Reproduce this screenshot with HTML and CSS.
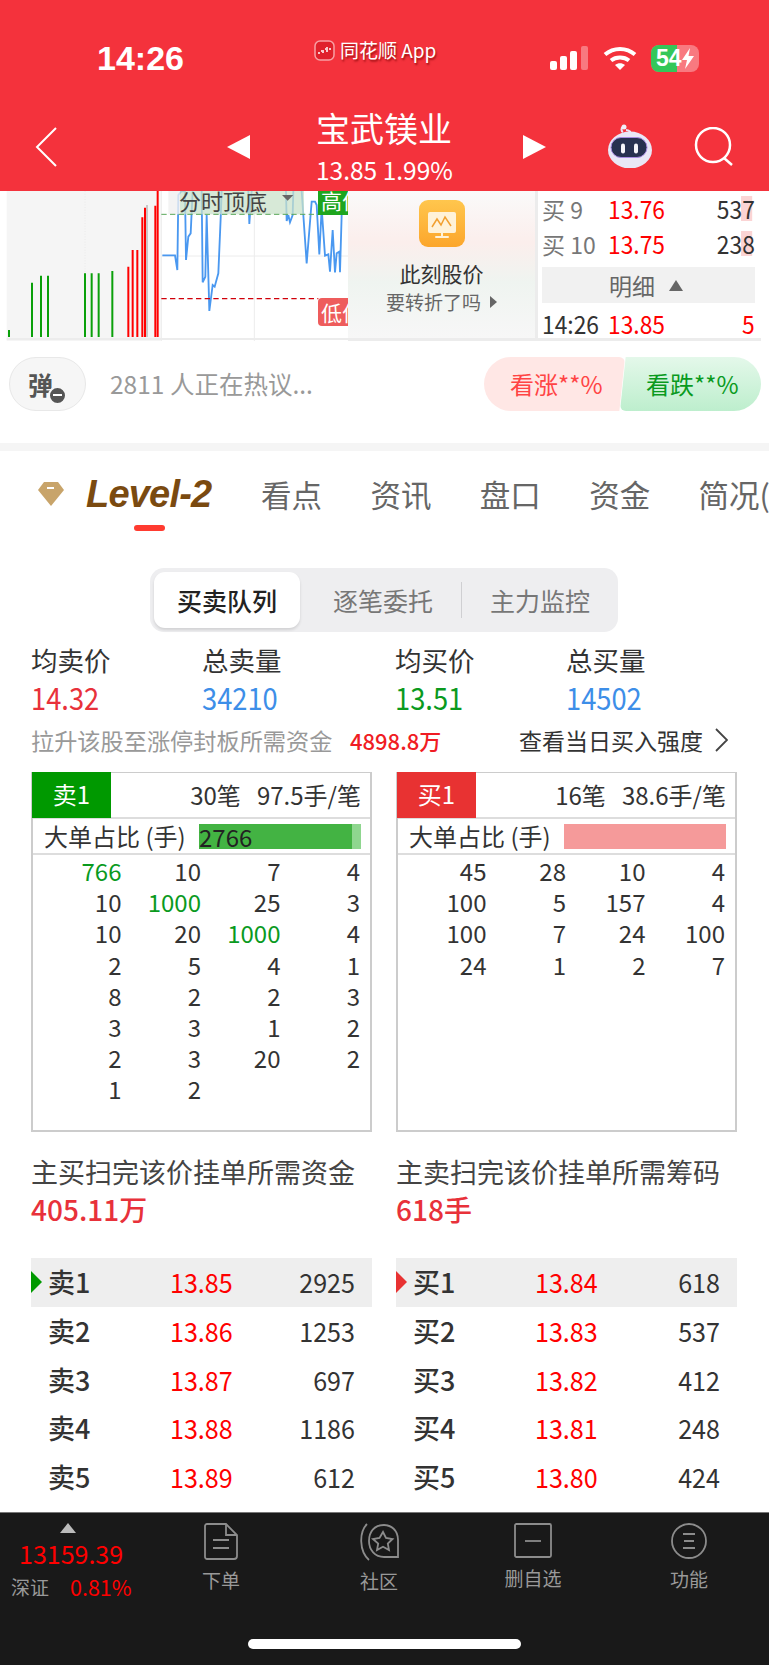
FILE: index.html
```html
<!DOCTYPE html>
<html>
<head>
  <meta charset="UTF-8">
  <meta name="viewport" content="width=device-width, initial-scale=1.0">
  <title>宝武镁业</title>
  <link rel="stylesheet" href="styles.css">
</head>
<body>
  <div class="page">
    <!-- 顶部 -->
    <div class="top">
      <div class="status">
        <span class="time">14:26</span>
        <span class="app-logo">
          <svg width="21" height="21" viewBox="0 0 21 21"><rect x="1" y="1" width="19" height="19" rx="5" fill="#e0212b" stroke="#f8a0a4" stroke-width="1.5"/><path d="M4 13h2M7 11h1M9 13v-3M11 9h1M13 12V7M15 9h2" stroke="#fff" stroke-width="1.5" fill="none"/></svg>
        </span>
        <span class="app-name">同花顺 App</span>
        <svg class="signal" width="38" height="24" viewBox="0 0 38 24"><rect x="0" y="15" width="7" height="9" rx="2" fill="#fff"/><rect x="10" y="10" width="7" height="14" rx="2" fill="#fff"/><rect x="20" y="5" width="7" height="19" rx="2" fill="#fff"/><rect x="31" y="0" width="7" height="24" rx="2" fill="#fff" fill-opacity=".35"/></svg>
        <svg class="wifi" width="34" height="24" viewBox="0 0 34 24" fill="none" stroke="#fff" stroke-width="4"><path d="M2 8.5C10.500 1 23.500 1 32 8.500"/><path d="M8 14.500C13 10.500 21 10.500 26 14.500"/><path d="M17 24l-5-5c3-2.500 7-2.500 10 0z" fill="#fff" stroke="none"/></svg>
        <span class="battery">
          <span class="battery-fill"></span>
          <span class="battery-text">54</span>
          <svg class="battery-bolt" width="12" height="21" viewBox="0 0 12 21"><path d="M8 0L0 12h5l-2 9 9-13H6.500z" fill="#fff"/></svg>
        </span>
      </div>
      <div class="nav">
        <svg class="back" width="22" height="40" viewBox="0 0 22 40" fill="none" stroke="#fff" stroke-width="2"><path d="M21 1L2 20l19 19"/></svg>
        <span class="tri-left"></span>
        <div class="title">
          <div class="title-name">宝武镁业</div>
          <div class="title-sub">13.85 1.99%</div>
        </div>
        <span class="tri-right"></span>
        <svg class="robot" width="48" height="44" viewBox="0 0 48 44">
          <path d="M17 8c-2-1-2-4 0-5" stroke="#e8e4f5" stroke-width="2" fill="none"/>
          <circle cx="18" cy="3" r="2.500" fill="#f0eef8"/>
          <path d="M20 6c4 0 3 2 5 2" stroke="#e8e4f5" stroke-width="2" fill="none"/>
          <ellipse cx="24" cy="26" rx="22" ry="18.500" fill="#e9e7f6"/>
          <rect x="5" y="13.500" width="36" height="20" rx="10" fill="#27314f" stroke="#a78be0" stroke-width="1"/>
          <rect x="15" y="19.500" width="4" height="10" rx="2" fill="#f4f4f8"/>
          <rect x="28" y="19.500" width="4" height="10" rx="2" fill="#f4f4f8"/>
        </svg>
        <svg class="search" width="40" height="40" viewBox="0 0 40 40" fill="none" stroke="#fff" stroke-width="2.500"><circle cx="19" cy="18" r="17"/><path d="M30 31l8 7"/></svg>
      </div>
    </div>

    <!-- 分时图 -->
    <div class="quote">
      <div class="chart">
        <svg class="chart-svg" width="348" height="150" viewBox="0 18 1044 450">
          <rect x="0" y="18" width="1044" height="450" fill="#fff"/>
          <rect x="20" y="18" width="462" height="450" fill="#f5f5f5"/>
          <path d="M255 18V440" stroke="#e6e6e6" stroke-width="2" stroke-dasharray="3 5"/>
          <path d="M763 18V468M484 18V468M485 213H1044" stroke="#ececec" stroke-width="3"/>
          <path d="M20 462H1044" stroke="#ececec" stroke-width="6"/>
          <g stroke="#0aa00a" stroke-width="6" fill="none">
            <path d="M27 456V435M96 456V293M123 456V272M144 456V272M255 456V265M275 456V265M296 456V265M337 456V258"/>
          </g>
          <path d="M441 456V60" stroke="#c8c8c8" stroke-width="6"/>
          <g stroke="#ff0000" stroke-width="6" fill="none">
            <path d="M385 456V245M398 456V195M412 456V195M427 456V97M435 456V68M466 456V62"/>
            <path d="M473 456V18"/>
          </g>
          <path d="M487 211H525L532 255L535 30L545 18L555 20L558 225L565 155L572 145L578 18M605 18L608 292L616 275L620 90L628 378L638 300L644 305L655 265L662 100L665 18M745 18L748 117L755 18M858 18L860 108L865 90L870 112L878 90L880 18M905 18L920 235L935 50L945 50L950 60L958 208L965 70L975 212L985 208L990 260L998 135L1005 262L1010 205L1018 200L1020 262L1025 90L1030 18" fill="none" stroke="#4a98f0" stroke-width="5.500"/>
          <rect x="505" y="18" width="35" height="70" fill="#f0f0f0" fill-opacity=".8"/>
          <rect x="540" y="18" width="372" height="70" fill="#c9e2c9" fill-opacity=".75"/>
          <path d="M484 88H955" stroke="#5aa85a" stroke-width="3" stroke-dasharray="16 10"/>
          <path d="M484 341H955" stroke="#d0000a" stroke-width="3.500" stroke-dasharray="16 10"/>
          <path d="M846 30h34l-17 17z" fill="#666"/>
        </svg>
        <span class="chart-tip">分时顶底</span>
        <span class="tag-high">高位</span>
        <span class="tag-low">低位</span>
      </div>
      <div class="promo">
        <svg class="promo-icon" width="46" height="47" viewBox="0 0 46 47">
          <defs><linearGradient id="orange" x1="0" y1="0" x2="0" y2="1"><stop offset="0" stop-color="#ffc64d"/><stop offset="1" stop-color="#fca62c"/></linearGradient></defs>
          <rect width="46" height="47" rx="9" fill="url(#orange)"/>
          <rect x="9" y="12" width="28" height="21" rx="2" fill="#fff2d8"/>
          <path d="M13 27l5-8 4 6 4-8 6 9" fill="none" stroke="#f2a030" stroke-width="1.500"/>
          <rect x="16" y="36" width="14" height="2" rx="1" fill="#fff2d8"/>
          <rect x="22" y="33" width="2" height="4" fill="#fff2d8"/>
        </svg>
        <div class="promo-title">此刻股价</div>
        <div class="promo-sub">要转折了吗<span class="promo-arrow"></span></div>
      </div>
      <div class="depth">
        <div class="depth-row"><span class="depth-name">买 9</span><span class="num up depth-price">13.76</span><span class="num depth-qty"><i class="depth-shade"></i>537</span></div>
        <div class="depth-row"><span class="depth-name">买 10</span><span class="num up depth-price">13.75</span><span class="num depth-qty"><i class="depth-shade"></i>238</span></div>
        <div class="depth-detail">明细<span class="depth-tri"></span></div>
        <div class="depth-row depth-last"><span class="num depth-time">14:26</span><span class="num up depth-price">13.85</span><span class="num up depth-qty">5</span></div>
      </div>
    </div>

    <!-- 弹幕 -->
    <div class="talk">
      <div class="danmu">弹<span class="danmu-minus"></span></div>
      <div class="talk-text">2811 人正在热议...</div>
      <div class="vote vote-up">看涨**%</div>
      <div class="vote vote-down">看跌**%</div>
    </div>
    <div class="sep"></div>

    <!-- tab -->
    <div class="tabs">
      <svg class="gem" width="26" height="24" viewBox="0 0 26 24"><path d="M6 0h14l6 8-13 16L0 8z" fill="#c8a46a"/><path d="M9 6h7" stroke="#fff" stroke-width="2"/></svg>
      <span class="tab-level">Level-2</span>
      <span class="tab tab-1">看点</span>
      <span class="tab">资讯</span>
      <span class="tab">盘口</span>
      <span class="tab">资金</span>
      <span class="tab">简况(</span>
    </div>
    <div class="tab-line"></div>

    <div class="segment">
      <span class="seg seg-on">买卖队列</span>
      <span class="seg seg-2">逐笔委托</span>
      <span class="seg-div"></span>
      <span class="seg seg-3">主力监控</span>
    </div>

    <div class="stats">
      <div><div class="stat-label">均卖价</div><div class="num stat-val stat-red">14.32</div></div>
      <div><div class="stat-label">总卖量</div><div class="num stat-val stat-blue">34210</div></div>
      <div><div class="stat-label">均买价</div><div class="num stat-val stat-green">13.51</div></div>
      <div><div class="stat-label">总买量</div><div class="num stat-val stat-blue">14502</div></div>
    </div>

    <div class="seal">
      <span class="seal-text">拉升该股至涨停封板所需资金</span>
      <span class="seal-val">4898.8万</span>
      <span class="seal-link">查看当日买入强度</span>
      <svg class="seal-arrow" width="13" height="24" viewBox="0 0 13 24" fill="none" stroke="#444" stroke-width="1.800"><path d="M1 1l11 11L1 23"/></svg>
    </div>

    <!-- 买卖队列 -->
    <div class="cols queues">
      <div class="queue">
        <div class="queue-head">
          <span class="queue-tag tag-sell">卖1</span>
          <span class="queue-info">30笔&nbsp;&nbsp;&nbsp;97.5手/笔</span>
        </div>
        <div class="queue-big">
          <span>大单占比 (手)</span>
          <div class="big-bar bar-sell"><span class="bar-fill"></span><span class="bar-num">2766</span></div>
        </div>
        <div class="queue-grid">
          <span class="big">766</span><span>10</span><span>7</span><span>4</span>
          <span>10</span><span class="big">1000</span><span>25</span><span>3</span>
          <span>10</span><span>20</span><span class="big">1000</span><span>4</span>
          <span>2</span><span>5</span><span>4</span><span>1</span>
          <span>8</span><span>2</span><span>2</span><span>3</span>
          <span>3</span><span>3</span><span>1</span><span>2</span>
          <span>2</span><span>3</span><span>20</span><span>2</span>
          <span>1</span><span>2</span><span></span><span></span>
        </div>
      </div>
      <div class="queue">
        <div class="queue-head">
          <span class="queue-tag tag-buy">买1</span>
          <span class="queue-info">16笔&nbsp;&nbsp;&nbsp;38.6手/笔</span>
        </div>
        <div class="queue-big">
          <span>大单占比 (手)</span>
          <div class="big-bar bar-buy"></div>
        </div>
        <div class="queue-grid">
          <span>45</span><span>28</span><span>10</span><span>4</span>
          <span>100</span><span>5</span><span>157</span><span>4</span>
          <span>100</span><span>7</span><span>24</span><span>100</span>
          <span>24</span><span>1</span><span>2</span><span>7</span>
        </div>
      </div>
    </div>

    <div class="cols sweep">
      <div>
        <div class="sweep-title">主买扫完该价挂单所需资金</div>
        <div class="sweep-val">405.11万</div>
      </div>
      <div>
        <div class="sweep-title">主卖扫完该价挂单所需筹码</div>
        <div class="sweep-val">618手</div>
      </div>
    </div>

    <!-- 五档 -->
    <div class="cols book">
      <div>
        <div class="book-row book-on"><i class="book-mark mark-sell"></i><span>卖1</span><span class="num up">13.85</span><span class="num book-qty">2925</span></div>
        <div class="book-row"><span>卖2</span><span class="num up">13.86</span><span class="num book-qty">1253</span></div>
        <div class="book-row"><span>卖3</span><span class="num up">13.87</span><span class="num book-qty">697</span></div>
        <div class="book-row"><span>卖4</span><span class="num up">13.88</span><span class="num book-qty">1186</span></div>
        <div class="book-row"><span>卖5</span><span class="num up">13.89</span><span class="num book-qty">612</span></div>
      </div>
      <div>
        <div class="book-row book-on"><i class="book-mark mark-buy"></i><span>买1</span><span class="num up">13.84</span><span class="num book-qty">618</span></div>
        <div class="book-row"><span>买2</span><span class="num up">13.83</span><span class="num book-qty">537</span></div>
        <div class="book-row"><span>买3</span><span class="num up">13.82</span><span class="num book-qty">412</span></div>
        <div class="book-row"><span>买4</span><span class="num up">13.81</span><span class="num book-qty">248</span></div>
        <div class="book-row"><span>买5</span><span class="num up">13.80</span><span class="num book-qty">424</span></div>
      </div>
    </div>

    <!-- 底部 -->
    <div class="foot">
      <div class="foot-bar">
        <div class="market">
          <span class="market-tri"></span>
          <div class="market-val">13159.39</div>
          <div class="market-line"><span class="market-name">深证</span><span class="market-pct">0.81%</span></div>
        </div>
        <div class="foot-item">
          <svg width="34" height="37" viewBox="0 0 34 37" fill="none" stroke="#8c8c8c" stroke-width="1.800"><path d="M3 1h19l11 11v21a3 3 0 0 1-3 3H3a2 2 0 0 1-2-2V3a2 2 0 0 1 2-2z"/><path d="M22 1v11h11M9 17h16M9 25h16"/></svg>
          <span>下单</span>
        </div>
        <div class="foot-item foot-community">
          <svg width="40" height="38" viewBox="0 0 40 38" fill="none" stroke="#8c8c8c" stroke-width="1.800"><path d="M39 34V17C39 7 32 2 25 2C15 2 10 9 10 18C10 27 16 34 25 34Z"/><path d="M8 1C0 9 0 28 10 37"/><path d="M24 9l3 6 6.500 1-4.700 4.500 1.200 6.500-6-3.200-6 3.200 1.200-6.500L14 16l6.500-1z"/></svg>
          <span>社区</span>
        </div>
        <div class="foot-item foot-watch">
          <svg width="38" height="35" viewBox="0 0 38 35" fill="none" stroke="#8c8c8c" stroke-width="1.800"><rect x="1" y="1" width="36" height="33" rx="1.500"/><path d="M11 18h16"/></svg>
          <span>删自选</span>
        </div>
        <div class="foot-item">
          <svg width="36" height="36" viewBox="0 0 36 36" fill="none" stroke="#8c8c8c" stroke-width="1.800"><ellipse cx="18" cy="18" rx="17" ry="17"/><path d="M12 11h12M13 18h10M12 25h12"/></svg>
          <span>功能</span>
        </div>
      </div>
      <div class="home-bar"></div>
    </div>
  </div>
</body>
</html>
```

FILE: styles.css
```css
body {
  margin: 0;
  font-family: "Noto Sans CJK SC", "Liberation Sans", sans-serif;
  color: #333;
  background: #fff;
}
.page {
  width: 769px;
  height: 1665px;
  overflow: hidden;
  display: flex;
  flex-direction: column;
}
.num {
  display: inline-block;
  transform: scaleX(.93);
  transform-origin: left center;
}
.up {
  color: #f00;
}

/* top */
.top {
  height: 191px;
  flex: none;
  background: #f4323c;
  color: #fff;
}
.status {
  height: 84px;
  padding-top: 16px;
  display: flex;
  align-items: center;
}
.time {
  margin-left: 97px;
  width: 217px;
  flex: none;
  font-family: "Liberation Sans", sans-serif;
  font-size: 34px;
  font-weight: bold;
}
.app-logo {
  display: flex;
  margin-top: -16px;
}
.app-name {
  margin: -16px 0 0 5px;
  width: 210px;
  flex: none;
  font-size: 19px;
  line-height: 26px;
  text-shadow: 1px 2px 2px rgba(120, 0, 0, .7);
}
.wifi {
  margin-left: 15px;
}
.battery {
  margin-left: 14px;
  width: 48px;
  height: 27px;
  border-radius: 8px;
  background: rgba(255, 255, 255, .35);
  overflow: hidden;
  position: relative;
  display: flex;
  align-items: center;
}
.battery-fill {
  position: absolute;
  left: 0;
  top: 0;
  bottom: 0;
  width: 26px;
  background: #34c759;
}
.battery-text {
  position: relative;
  margin-left: 5px;
  font-family: "Liberation Sans", sans-serif;
  font-size: 23px;
  font-weight: bold;
}
.battery-bolt {
  position: relative;
}
.nav {
  height: 91px;
  display: flex;
  align-items: center;
  padding-left: 35px;
}
.back {
  flex: none;
  margin-top: 3px;
}
.tri-left {
  margin: 3px 0 0 170px;
  border-style: solid;
  border-width: 12.500px 23px 12.500px 0;
  border-color: transparent #fff transparent transparent;
}
.tri-right {
  margin: 3px 0 0 71px;
  border-style: solid;
  border-width: 12.500px 0 12.500px 23px;
  border-color: transparent transparent transparent #fff;
}
.title {
  margin-left: 66px;
  width: 136px;
  flex: none;
  text-align: center;
  white-space: nowrap;
}
.title-name {
  font-size: 34px;
  line-height: 40px;
}
.title-sub {
  margin-top: 8px;
  font-size: 24.500px;
  line-height: 28px;
}
.robot {
  flex: none;
  margin-left: 60px;
}
.search {
  flex: none;
  margin: 3px 0 0 40px;
}

/* chart */
.quote {
  height: 150px;
  flex: none;
  display: flex;
  overflow: hidden;
}
.chart {
  width: 348px;
  flex: none;
  position: relative;
  overflow: hidden;
}
.chart-svg {
  display: block;
}
.chart-tip {
  position: absolute;
  left: 179px;
  top: -6px;
  font-size: 22px;
  line-height: 30px;
  color: #444;
}
.tag-high,
.tag-low {
  position: absolute;
  left: 318px;
  width: 44px;
  padding-left: 3px;
  color: #fff;
  font-size: 21px;
  white-space: nowrap;
}
.tag-high {
  top: -6px;
  height: 30px;
  line-height: 30px;
  background: #1ea51e;
}
.tag-low {
  top: 107px;
  height: 28px;
  line-height: 28px;
  background: #ee5c5c;
  border-radius: 4px 0 0 4px;
}
.promo {
  width: 187px;
  flex: none;
  box-sizing: border-box;
  padding-top: 9px;
  border-bottom: 3px solid #ececec;
  display: flex;
  flex-direction: column;
  align-items: center;
  background: linear-gradient(180deg, #fafafa 0%, #fbeeec 35%, #eff4f0 62%, #f7f7f7 100%);
}
.promo-icon {
  display: block;
}
.promo-title {
  margin-top: 13px;
  font-size: 21px;
  line-height: 26px;
  color: #333;
}
.promo-sub {
  margin-top: 5px;
  font-size: 19px;
  line-height: 22px;
  color: #666;
  display: flex;
  align-items: center;
}
.promo-arrow {
  margin-left: 9px;
  border-style: solid;
  border-width: 6px 0 6px 7px;
  border-color: transparent transparent transparent #666;
}
.depth {
  width: 226px;
  flex: none;
  box-sizing: border-box;
  padding: 0 6px 0 4px;
  border-left: 3px solid #ececec;
  border-bottom: 3px solid #ececec;
}
.depth-row {
  height: 35px;
  display: flex;
  align-items: center;
  font-size: 24.500px;
  line-height: 30px;
  white-space: nowrap;
}
.depth-name {
  width: 66px;
  flex: none;
  font-size: 23px;
  color: #777;
}
.depth-price {
  width: 85px;
  flex: none;
}
.depth-qty {
  margin-left: auto;
  position: relative;
  color: #333;
  transform-origin: right center;
}
.depth-qty.up {
  color: #f00;
}
.depth-shade {
  position: absolute;
  right: 3px;
  top: 2px;
  width: 12px;
  height: 25px;
  background: #fbd4d4;
  z-index: -1;
}
.depth-time {
  width: 66px;
  flex: none;
}
.depth-detail {
  height: 36px;
  margin-top: 6px;
  background: #f1f1f1;
  display: flex;
  align-items: center;
  padding-left: 67px;
  font-size: 23px;
  color: #666;
}
.depth-tri {
  margin-left: 14px;
  border-style: solid;
  border-width: 0 7px 11px 7px;
  border-color: transparent transparent #666 transparent;
}
.depth-last {
  margin-top: 3px;
}

/* talk */
.talk {
  height: 86px;
  padding-top: 16px;
  flex: none;
  display: flex;
  align-items: flex-start;
  padding-left: 9px;
}
.danmu {
  width: 77px;
  height: 54px;
  flex: none;
  box-sizing: border-box;
  border: 1px solid #e8e8e8;
  border-radius: 27px;
  background: #f6f6f6;
  padding-left: 18px;
  font-size: 25px;
  font-weight: bold;
  line-height: 52px;
  color: #555;
  position: relative;
}
.danmu-minus {
  position: absolute;
  left: 38px;
  top: 28px;
  width: 15px;
  height: 15px;
  border-radius: 50%;
  background: #555;
  border: 2px solid #f6f6f6;
}
.danmu-minus::after {
  content: "";
  position: absolute;
  left: 3px;
  top: 6px;
  width: 9px;
  height: 2px;
  background: #fff;
}
.talk-text {
  margin-left: 24px;
  width: 374px;
  flex: none;
  font-size: 24.500px;
  line-height: 54px;
  color: #999;
}
.vote {
  height: 54px;
  width: 141px;
  flex: none;
  box-sizing: border-box;
  font-size: 24px;
  line-height: 54px;
  white-space: nowrap;
}
.vote-up {
  padding-left: 26px;
  color: #f44;
  background: #ffe7e5;
  border-radius: 27px 6px 6px 27px;
  clip-path: polygon(0 0, 100% 0, 96% 100%, 0 100%);
}
.vote-down {
  margin-left: -5px;
  padding-left: 26px;
  color: #0a9a1e;
  background: linear-gradient(180deg, #e4f8ea, #bdeecd);
  border-radius: 6px 27px 27px 6px;
  clip-path: polygon(4% 0, 100% 0, 100% 100%, 0 100%);
}
.sep {
  height: 8px;
  flex: none;
  background: #f5f5f5;
}

/* tabs */
.tabs {
  height: 74px;
  flex: none;
  box-sizing: border-box;
  padding: 23px 0 0 38px;
  display: flex;
  align-items: flex-start;
  overflow: hidden;
  white-space: nowrap;
}
.gem {
  flex: none;
  margin-top: 8px;
}
.tab-level {
  margin-left: 22px;
  width: 129px;
  flex: none;
  font-family: "Liberation Sans", sans-serif;
  font-size: 38px;
  line-height: 40px;
  font-weight: bold;
  font-style: italic;
  color: #7a4a10;
  letter-spacing: -.8px;
}
.tab {
  width: 109.400px;
  flex: none;
  font-size: 30.500px;
  line-height: 40px;
  color: #666;
}
.tab-1 {
  margin-left: 46px;
}
.tab-line {
  width: 31px;
  height: 6px;
  flex: none;
  margin-left: 134px;
  border-radius: 3px;
  background: #ff3b30;
}
.segment {
  width: 468px;
  height: 64px;
  flex: none;
  box-sizing: border-box;
  margin: 37px 0 0 150px;
  padding: 4px;
  background: #eeeef0;
  border-radius: 14px;
  display: flex;
  align-items: center;
}
.seg {
  font-size: 25px;
  color: #777;
  white-space: nowrap;
}
.seg-on {
  width: 146px;
  height: 56px;
  line-height: 56px;
  text-align: center;
  background: #fff;
  border-radius: 11px;
  box-shadow: 0 2px 3px rgba(0, 0, 0, .12);
  color: #222;
  font-weight: 500;
}
.seg-2 {
  margin-left: 33px;
}
.seg-div {
  width: 1px;
  height: 36px;
  margin: 0 28px;
  background: #cfcfd2;
}

/* stats */
.stats {
  display: grid;
  grid-template-columns: 171px 193px 171px 120px;
  padding-left: 31px;
  margin-top: 12px;
  flex: none;
}
.stat-label {
  font-size: 26.500px;
  line-height: 32px;
  color: #333;
}
.stat-val {
  display: block;
  margin-top: 4px;
  font-size: 30px;
  line-height: 34px;
  transform: scaleX(.91);
}
.stat-red {
  color: #e8313a;
}
.stat-blue {
  color: #3d8ee8;
}
.stat-green {
  color: #0a9a1e;
}
.seal {
  margin-top: 11px;
  height: 30px;
  flex: none;
  padding-left: 31px;
  display: flex;
  align-items: center;
  white-space: nowrap;
}
.seal-text {
  width: 319px;
  flex: none;
  font-size: 23.200px;
  color: #999;
}
.seal-val {
  width: 169px;
  flex: none;
  font-size: 22px;
  font-weight: 500;
  color: #f01c24;
}
.seal-link {
  width: 196px;
  flex: none;
  font-size: 23px;
  color: #333;
}
.cols {
  display: grid;
  grid-template-columns: 341px 341px;
  column-gap: 24px;
  padding-left: 31px;
  flex: none;
}

/* queue */
.queues {
  margin-top: 17px;
}
.queue {
  height: 360px;
  box-sizing: border-box;
  border: 2px solid #ccc;
  border-top-width: 1px;
}
.queue-head {
  height: 44px;
  display: flex;
  align-items: center;
  justify-content: space-between;
  border-bottom: 2px solid #ddd;
  padding-right: 9px;
  font-size: 24px;
  line-height: 30px;
}
.queue-tag {
  width: 79px;
  height: 46px;
  margin-left: -1px;
  line-height: 44px;
  text-align: center;
  color: #fff;
  font-size: 24px;
}
.tag-sell {
  background: #009900;
}
.tag-buy {
  background: #e83232;
}
.queue-info {
  white-space: nowrap;
}
.queue-big {
  height: 34px;
  display: flex;
  align-items: center;
  justify-content: space-between;
  padding: 0 9px 0 11px;
  border-bottom: 2px solid #ddd;
  font-size: 24px;
  line-height: 30px;
  white-space: nowrap;
}
.big-bar {
  width: 162px;
  height: 25px;
  position: relative;
}
.bar-sell {
  background: #8fd68f;
}
.bar-buy {
  background: #f59a9a;
}
.bar-fill {
  position: absolute;
  left: 0;
  top: 0;
  bottom: 0;
  width: 153px;
  background: #43b343;
}
.bar-num {
  position: relative;
  display: block;
  line-height: 25px;
  color: #222;
}
.queue-grid {
  display: grid;
  grid-template-columns: repeat(4, 79.500px);
  grid-auto-rows: 31.200px;
  justify-content: end;
  padding: 0 10px 0 0;
  font-size: 24px;
  line-height: 31px;
  text-align: right;
}
.queue-grid .big {
  color: #0a9a1e;
}

/* sweep */
.sweep {
  margin-top: 22px;
}
.sweep-title {
  font-size: 27px;
  line-height: 36px;
  white-space: nowrap;
  color: #444;
}
.sweep-val {
  margin-top: 2px;
  font-size: 28px;
  font-weight: 500;
  line-height: 34px;
  color: #e8313a;
}

/* book */
.book {
  margin-top: 32px;
}
.book-row {
  height: 48.700px;
  display: grid;
  grid-template-columns: 122px 1fr auto;
  align-items: center;
  padding: 0 17px;
  font-size: 27px;
  font-weight: 500;
  line-height: 36px;
  position: relative;
}
.book-row .num {
  font-weight: 400;
}
.book-row .book-qty {
  color: #333;
  transform-origin: right center;
}
.book-on {
  background: #eee;
}
.book-mark {
  position: absolute;
  left: 0;
  top: 13px;
  border-style: solid;
  border-width: 11.500px 0 11.500px 11px;
  border-color: transparent;
}
.mark-sell {
  border-left-color: #009900;
}
.mark-buy {
  border-left-color: #e83232;
}

/* foot */
.foot {
  margin-top: auto;
  height: 153px;
  flex: none;
  box-sizing: border-box;
  border-top: 1px solid #777;
  background: #191919;
  position: relative;
}
.foot-bar {
  display: flex;
  padding-top: 10px;
}
.market {
  width: 141px;
  flex: none;
  box-sizing: border-box;
  padding-left: 11px;
  display: flex;
  flex-direction: column;
}
.market-tri {
  width: 0;
  margin-left: 49px;
  border-style: solid;
  border-width: 0 8.500px 10px 8.500px;
  border-color: transparent transparent #bbb transparent;
}
.market-val {
  margin: 3px 0 0 8px;
  font-size: 25px;
  line-height: 34px;
  color: #f00;
}
.market-line {
  display: flex;
  align-items: center;
  margin-top: 2px;
  height: 28px;
}
.market-name {
  width: 59px;
  flex: none;
  font-size: 19px;
  color: #999;
}
.market-pct {
  font-size: 21.500px;
  color: #f00;
}
.foot-item {
  width: 100px;
  flex: none;
  margin-left: 56px;
  display: flex;
  flex-direction: column;
  align-items: center;
  font-size: 19px;
  color: #999;
}
.foot-item:nth-child(2) {
  margin-left: 30px;
}
.foot-community {
  margin-left: 58px;
}
.foot-watch {
  margin-left: 54px;
}
.foot-item span {
  margin-top: 6px;
  line-height: 28px;
}
.home-bar {
  position: absolute;
  left: 248px;
  top: 126px;
  width: 273px;
  height: 10px;
  border-radius: 5px;
  background: #fff;
}
```
